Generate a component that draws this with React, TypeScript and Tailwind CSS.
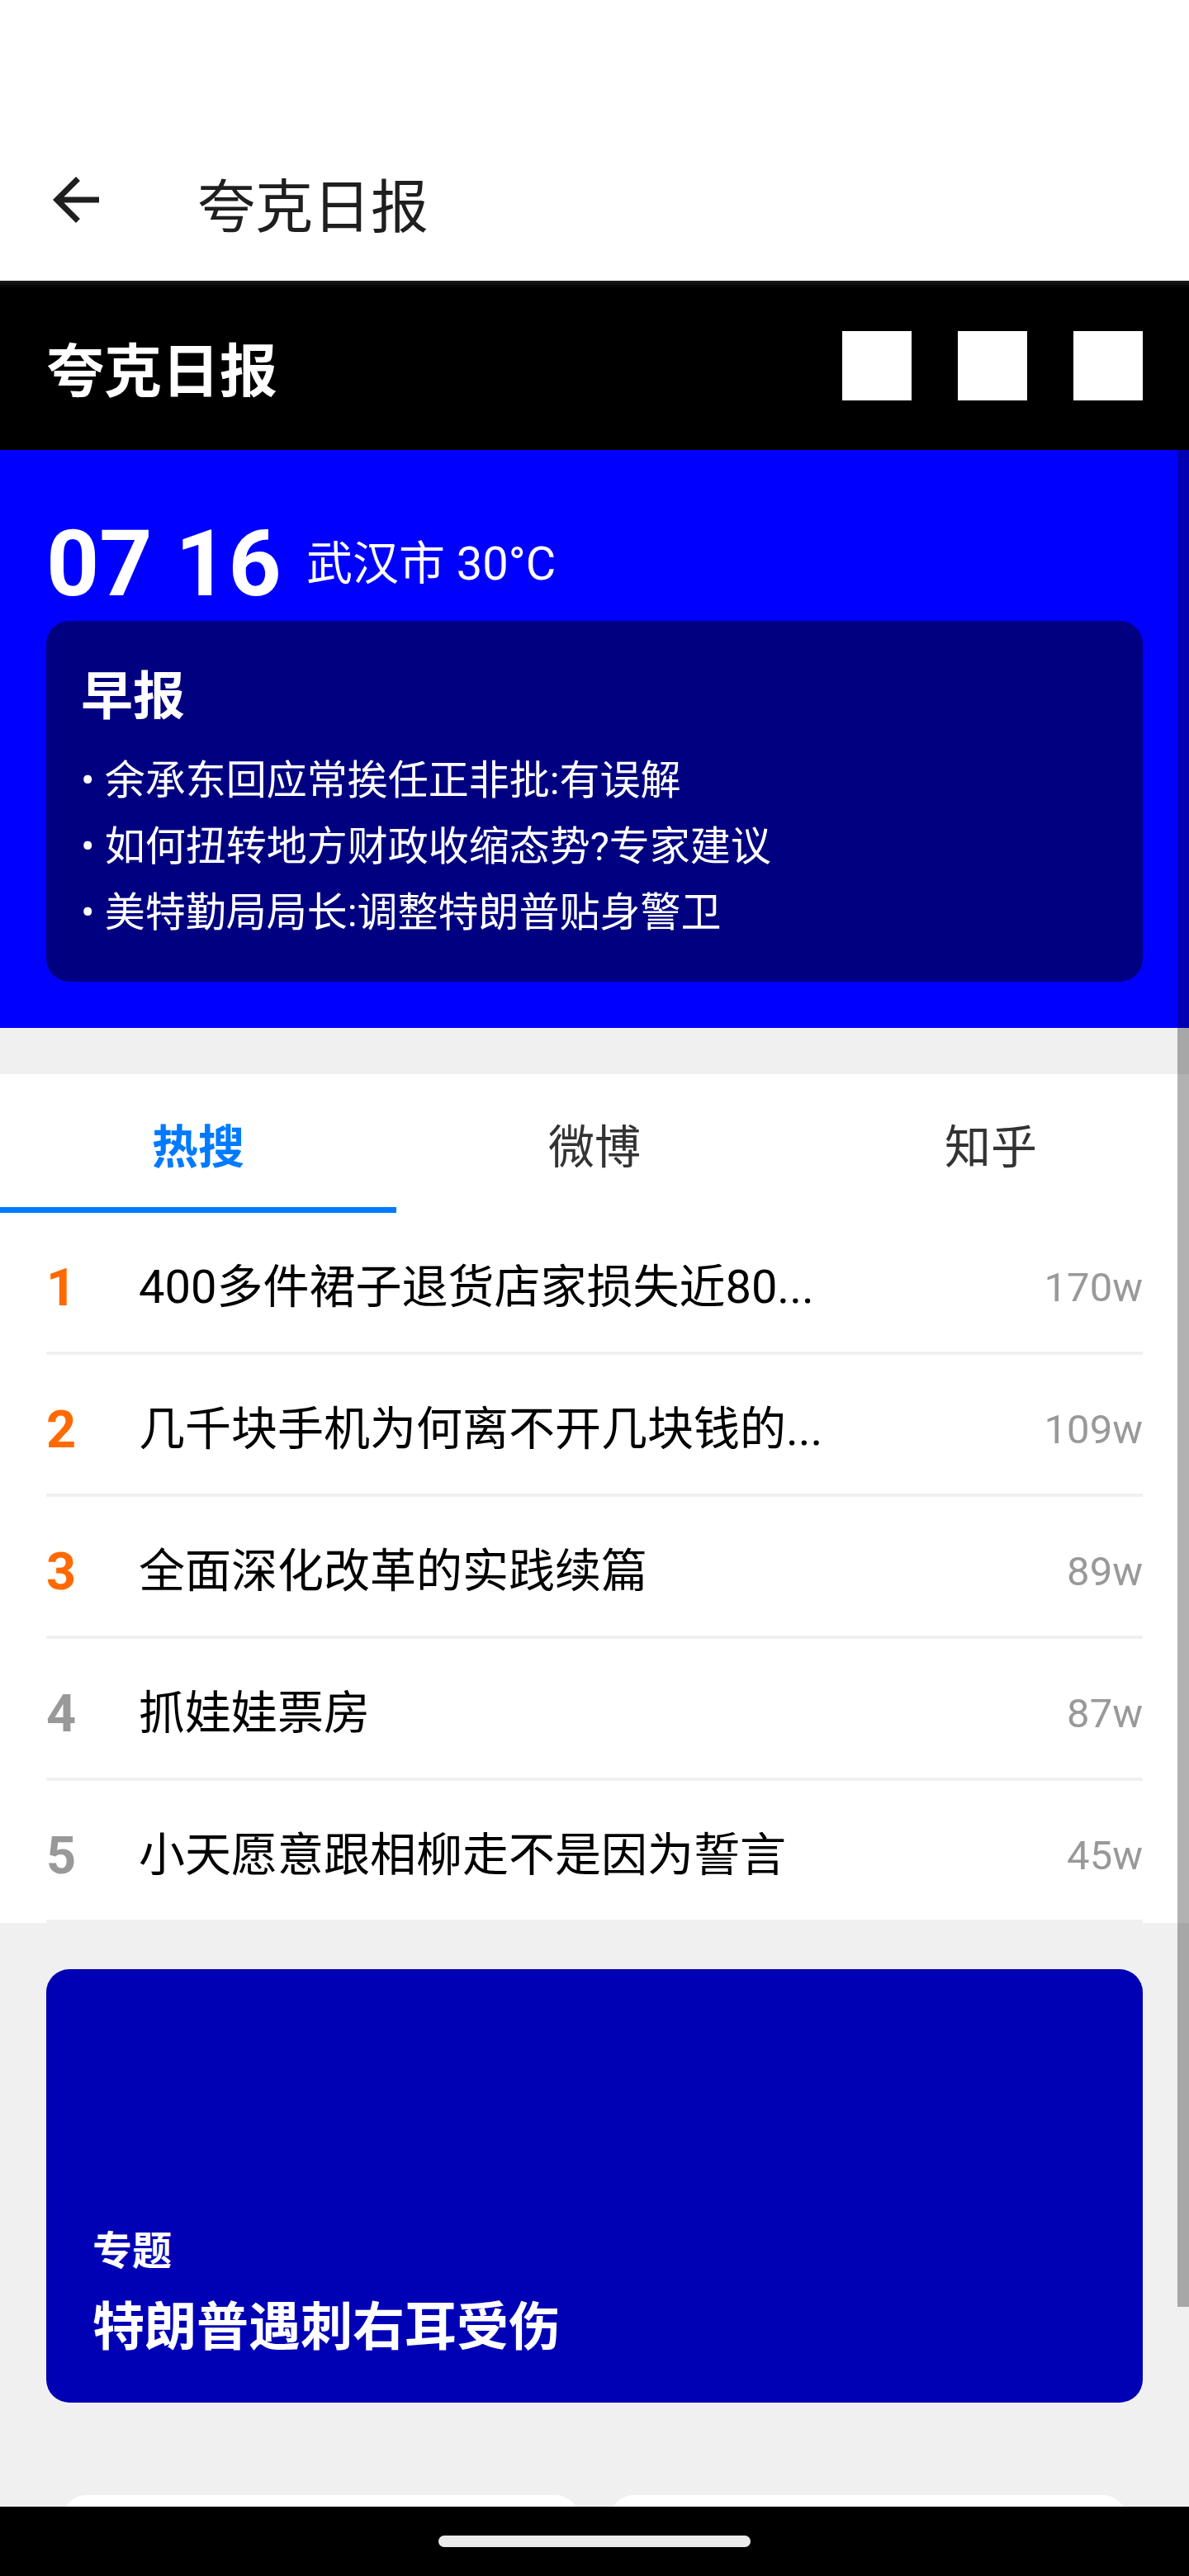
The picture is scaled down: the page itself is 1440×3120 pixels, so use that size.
import React from "react";

const morning = [
  "余承东回应常挨任正非批:有误解",
  "如何扭转地方财政收缩态势?专家建议",
  "美特勤局局长:调整特朗普贴身警卫",
];

const hotList = [
  { rank: 1, title: "400多件裙子退货店家损失近80...", heat: "170w" },
  { rank: 2, title: "几千块手机为何离不开几块钱的...", heat: "109w" },
  { rank: 3, title: "全面深化改革的实践续篇", heat: "89w" },
  { rank: 4, title: "抓娃娃票房", heat: "87w" },
  { rank: 5, title: "小天愿意跟相柳走不是因为誓言", heat: "45w" },
];

const tabs = ["热搜", "微博", "知乎"];

function HotRow({ rank, title, heat }: { rank: number; title: string; heat: string }) {
  return (
    <div>
      <div className="flex h-[168px] items-center px-[56px] pt-[12px]">
        <span
          className={
            rank <= 3
              ? "w-[112px] shrink-0 text-[63px] font-bold leading-none text-[#ff6a00]"
              : "w-[112px] shrink-0 text-[63px] font-bold leading-none text-[#999999]"
          }
        >
          {rank}
        </span>
        <span className="min-w-0 flex-1 truncate text-[56px] leading-[80px] text-black">{title}</span>
        <span className="ml-[24px] shrink-0 text-[49px] leading-none text-[#999999]">{heat}</span>
      </div>
      <div className="mx-[56px] h-[4px] bg-[#f0f0f0]" />
    </div>
  );
}

export default function App() {
  return (
    <div className="flex h-[3120px] w-[1440px] flex-col overflow-hidden bg-[#f0f0f0] font-[Roboto,'Noto_Sans_CJK_SC',sans-serif]">
      {/* status bar */}
      <div className="h-[144px] shrink-0 bg-white" />

      {/* toolbar */}
      <header className="flex h-[196px] shrink-0 items-center bg-white">
        <svg className="ml-[50px] h-[84px] w-[84px] shrink-0" viewBox="0 0 24 24">
          <path fill="#1f1f1f" d="M20 11H7.83l5.59-5.59L12 4l-8 8 8 8 1.41-1.41L7.83 13H20v-2z" />
        </svg>
        <h1 className="ml-[105px] mt-[20px] text-[70px] font-normal leading-none text-[#1f1f1f]">夸克日报</h1>
      </header>

      {/* black header */}
      <div className="relative flex h-[205px] shrink-0 items-center justify-between bg-black px-[56px]">
        <div className="absolute inset-x-0 top-0 h-[14px] bg-gradient-to-b from-[#1c1c1c] to-black" />
        <div className="mt-[16px] text-[70px] font-bold leading-none text-white">夸克日报</div>
        <div className="flex gap-[56px]">
          <div className="h-[84px] w-[84px] bg-white" />
          <div className="h-[84px] w-[84px] bg-white" />
          <div className="h-[84px] w-[84px] bg-white" />
        </div>
      </div>

      {/* scroll area */}
      <div className="relative min-h-0 flex-1 overflow-hidden">
        <section className="bg-[#0000ff] px-[56px] pb-[56px] pt-[72px]">
          <div className="flex items-center gap-[30px] text-white">
            <span className="text-[112px] font-bold leading-[131px]">07 16</span>
            <span className="text-[56px] leading-[66px]">武汉市 30°C</span>
          </div>
          <div className="mt-[4px] rounded-[28px] bg-[#000080] px-[42px] pb-[43px] pt-[42px] text-white">
            <div className="text-[63px] font-bold leading-[100px]">早报</div>
            <ul className="mt-[12px]">
              {morning.map((m) => (
                <li key={m} className="text-[49px] leading-[80px]">
                  • {m}
                </li>
              ))}
            </ul>
          </div>
        </section>

        <section className="mt-[56px] bg-white">
          <div className="flex h-[161px] pt-[16px]">
            {tabs.map((t, i) => (
              <div
                key={t}
                className={
                  i === 0
                    ? "flex flex-1 items-center justify-center text-[56px] font-bold text-[#007aff]"
                    : "flex flex-1 items-center justify-center text-[56px] text-[#333333]"
                }
              >
                {t}
              </div>
            ))}
          </div>
          <div className="h-[7px] w-[480px] bg-[#007aff]" />
          {hotList.map((h) => (
            <HotRow key={h.rank} {...h} />
          ))}
        </section>

        <div className="mx-[56px] mt-[56px] flex h-[525px] flex-col justify-end rounded-[28px] bg-[#0000b5] pb-[47px] pl-[56px] text-white">
          <div className="text-[48px] font-bold leading-[64px]">专题</div>
          <div className="mt-[16px] text-[63px] font-bold leading-[88px]">特朗普遇刺右耳受伤</div>
        </div>

        <div className="mt-[112px] grid grid-cols-2 gap-[38px] px-[76px]">
          <div className="h-[300px] rounded-[28px] bg-white" />
          <div className="h-[300px] rounded-[28px] bg-white" />
        </div>

        {/* scrollbar thumb */}
        <div className="absolute right-0 top-0 h-[2249px] w-[14px] bg-black/30" />
      </div>

      {/* navigation bar */}
      <div className="flex h-[84px] shrink-0 items-center justify-center bg-black">
        <div className="h-[14px] w-[378px] rounded-full bg-[#ebebeb]" />
      </div>
    </div>
  );
}
